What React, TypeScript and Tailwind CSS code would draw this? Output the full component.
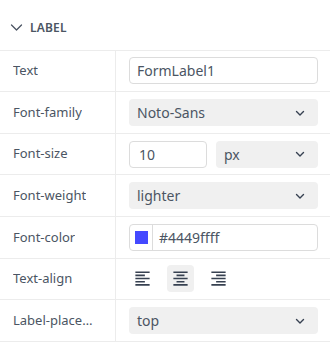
import React from "react";
import { MdFormatAlignLeft, MdFormatAlignCenter, MdFormatAlignRight } from "react-icons/md";

const Chevron = () => (
  <svg width="12" height="12" viewBox="0 0 12 12" fill="none" stroke="#374151" strokeWidth="1.4" strokeLinecap="round" strokeLinejoin="round">
    <path d="M2.5 4.5L6 8L9.5 4.5" />
  </svg>
);

const Select = ({ value, className = "" }: { value: string; className?: string }) => (
  <div className={`h-[27px] rounded-[4px] bg-[#f0f0f0] flex items-center justify-between pl-[8px] pr-[12px] text-[14px] text-[#4b5563] ${className}`}>
    <span>{value}</span>
    <Chevron />
  </div>
);

const Row = ({ label, children }: { label: string; children: React.ReactNode }) => (
  <div className="flex h-[41.6px] border-b border-[#ececec]">
    <div className="w-[116px] shrink-0 border-r border-[#ececec] pl-[13px] pr-[22px] flex items-center text-[13px] text-[#4b5563] min-w-0">
      <span className="truncate">{label}</span>
    </div>
    <div className="flex-1 pl-[13px] pr-[12px] flex items-center min-w-0">{children}</div>
  </div>
);

export default function App() {
  return (
    <div className="w-[330px] h-[346px] bg-white overflow-hidden" style={{ fontFamily: '"Noto Sans", sans-serif' }}>
      <div className="h-[50.7px] border-b border-[#ececec] flex items-center pl-[10px] gap-[7px] pt-[6px]">
        <svg width="13" height="13" viewBox="0 0 13 13" fill="none" stroke="#4b5563" strokeWidth="1.3" strokeLinecap="round" strokeLinejoin="round">
          <path d="M1.5 4L6.5 9L11.5 4" />
        </svg>
        <span className="text-[12px] font-semibold text-[#4b5563] tracking-[0.2px]">LABEL</span>
      </div>
      <Row label="Text">
        <div className="w-full h-[27px] rounded-[4px] border border-[#dcdcdc] flex items-center pl-[7px] text-[14px] text-[#4b5563]">FormLabel1</div>
      </Row>
      <Row label="Font-family">
        <Select value="Noto-Sans" className="w-full" />
      </Row>
      <Row label="Font-size">
        <div className="flex gap-[9px] w-full">
          <div className="w-[78px] h-[27px] rounded-[4px] border border-[#dcdcdc] flex items-center pl-[9px] text-[14px] text-[#4b5563]">10</div>
          <Select value="px" className="flex-1" />
        </div>
      </Row>
      <Row label="Font-weight">
        <Select value="lighter" className="w-full" />
      </Row>
      <Row label="Font-color">
        <div className="w-full h-[27px] rounded-[4px] border border-[#dcdcdc] flex items-center text-[14px] text-[#4b5563]">
          <div className="w-[23px] h-full flex items-center justify-center border-r border-[#dcdcdc]">
            <div className="w-[13px] h-[13px] bg-[#4449ff]" />
          </div>
          <span className="pl-[6px]">#4449ffff</span>
        </div>
      </Row>
      <Row label="Text-align">
        <div className="flex items-center gap-[11px]">
          <div className="w-[27px] h-[27px] flex items-center justify-center rounded-[4px] text-[#374151]">
            <MdFormatAlignLeft size={19} />
          </div>
          <div className="w-[27px] h-[27px] flex items-center justify-center rounded-[4px] bg-[#f0f0f0] text-[#374151]">
            <MdFormatAlignCenter size={19} />
          </div>
          <div className="w-[27px] h-[27px] flex items-center justify-center rounded-[4px] text-[#374151]">
            <MdFormatAlignRight size={19} />
          </div>
        </div>
      </Row>
      <Row label="Label-placement">
        <Select value="top" className="w-full" />
      </Row>
    </div>
  );
}
